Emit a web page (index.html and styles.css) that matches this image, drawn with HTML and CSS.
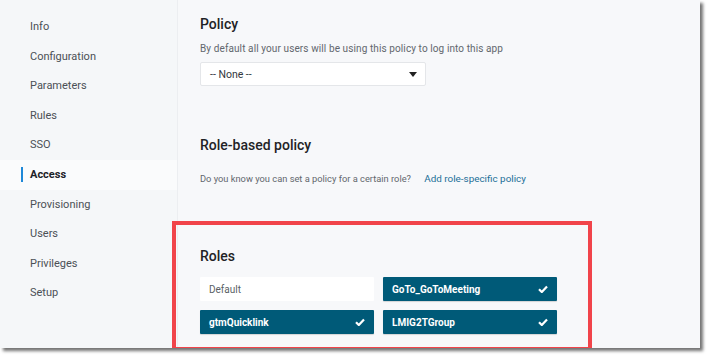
FILE: index.html
```html
<!DOCTYPE html>
<html>
<head>
<meta charset="utf-8">
<link rel="stylesheet" href="styles.css">
</head>
<body>
<div class="window">
  <nav class="sidebar">
    <div class="nav-item">Info</div>
    <div class="nav-item">Configuration</div>
    <div class="nav-item">Parameters</div>
    <div class="nav-item">Rules</div>
    <div class="nav-item">SSO</div>
    <div class="nav-item active">Access</div>
    <div class="nav-item">Provisioning</div>
    <div class="nav-item">Users</div>
    <div class="nav-item">Privileges</div>
    <div class="nav-item">Setup</div>
  </nav>
  <main class="main">
    <section class="sec sec-policy">
      <h2 class="title">Policy</h2>
      <p class="desc">By default all your users will be using this policy to log into this app</p>
      <div class="select">
        <span>-- None --</span>
        <svg class="caret" width="8" height="5" viewBox="0 0 8 5"><path d="M0 0H8L4 5Z" fill="#222"/></svg>
      </div>
    </section>
    <section class="sec sec-role">
      <h2 class="title">Role-based policy</h2>
      <p class="desc small">Do you know you can set a policy for a certain role? <a class="link">Add role-specific policy</a></p>
    </section>
    <section class="sec sec-roles">
      <h2 class="title">Roles</h2>
      <div class="chips">
        <div class="chip off">Default</div>
        <div class="chip on">GoTo_GoToMeeting<svg class="check" width="10" height="8" viewBox="0 0 10 8"><path d="M1 4.2L3.8 7L9 1.4" stroke="#fff" stroke-width="2.2" fill="none"/></svg></div>
        <div class="chip on">gtmQuicklink<svg class="check" width="10" height="8" viewBox="0 0 10 8"><path d="M1 4.2L3.8 7L9 1.4" stroke="#fff" stroke-width="2.2" fill="none"/></svg></div>
        <div class="chip on">LMIG2TGroup<svg class="check" width="10" height="8" viewBox="0 0 10 8"><path d="M1 4.2L3.8 7L9 1.4" stroke="#fff" stroke-width="2.2" fill="none"/></svg></div>
      </div>
    </section>
    <div class="highlight"></div>
  </main>
</div>
</body>
</html>
```
FILE: styles.css
```css
* { box-sizing: border-box; }
html, body { margin: 0; padding: 0; background: #fff; }
body { font-family: Roboto, "Liberation Sans", sans-serif; width: 715px; height: 362px; overflow: hidden; }
.window {
  width: 700px; height: 348px; display: flex; background: #f7f8fa;
  box-shadow: 3px 3px 3px rgba(0,0,0,0.55);
  overflow: hidden;
}
.sidebar {
  width: 178px; flex: none; background: #f5f7f9; border-right: 1px solid #eceef1;
  padding-top: 12px;
}
.nav-item {
  position: relative; height: 29.6px; line-height: 29.6px; padding-left: 30px;
  font-size: 11px; color: #4b5056;
}
.nav-item.active { background: #fafbfc; font-weight: 700; color: #1d2228; }
.nav-item.active::before {
  content: ""; position: absolute; left: 21px; top: 7px; width: 2px; height: 15px; background: #1e88d8;
}
.main { position: relative; flex: 1; padding-left: 22px; }
.sec { margin: 0; }
.title { margin: 0; font-size: 14px; line-height: 18px; font-weight: 500; color: #1f2326; }
.desc { margin: 0; font-size: 10px; line-height: 14px; color: #62676d; letter-spacing: 0.1px; }
.desc.small { font-size: 9.3px; letter-spacing: 0; }
.sec-policy { padding-top: 15px; }
.sec-policy .desc { margin-top: 9px; }
.select {
  margin-top: 6px; width: 226px; height: 24px; background: #fff; border: 1px solid #e4e6e9; border-radius: 2px;
  display: flex; align-items: center; justify-content: space-between; padding: 0 8px 0 9px;
  font-size: 10.5px; color: #33383d;
}
.sec-role { margin-top: 50px; }
.sec-role .desc { margin-top: 18px; }
.link { color: #1b6f98; font-size: 9.9px; margin-left: 11px; }
.sec-roles { margin-top: 61px; }
.chips { margin-top: 12px; display: grid; grid-template-columns: 174px 174px; gap: 9px; }
.chip {
  height: 24px; display: flex; align-items: center; justify-content: space-between;
  padding: 0 9px; font-size: 10px; border-radius: 1px;
}
.chip.off { background: #fff; color: #5a5f65; }
.chip.on { background: #005a78; color: #fff; font-weight: 700; box-shadow: 0 1px 1px rgba(0,0,0,0.15); }
.check { margin-right: 0; }
.highlight {
  position: absolute; left: -6px; top: 221px; width: 420px; height: 130px;
  border: 4px solid #f1444a; pointer-events: none;
}
```
